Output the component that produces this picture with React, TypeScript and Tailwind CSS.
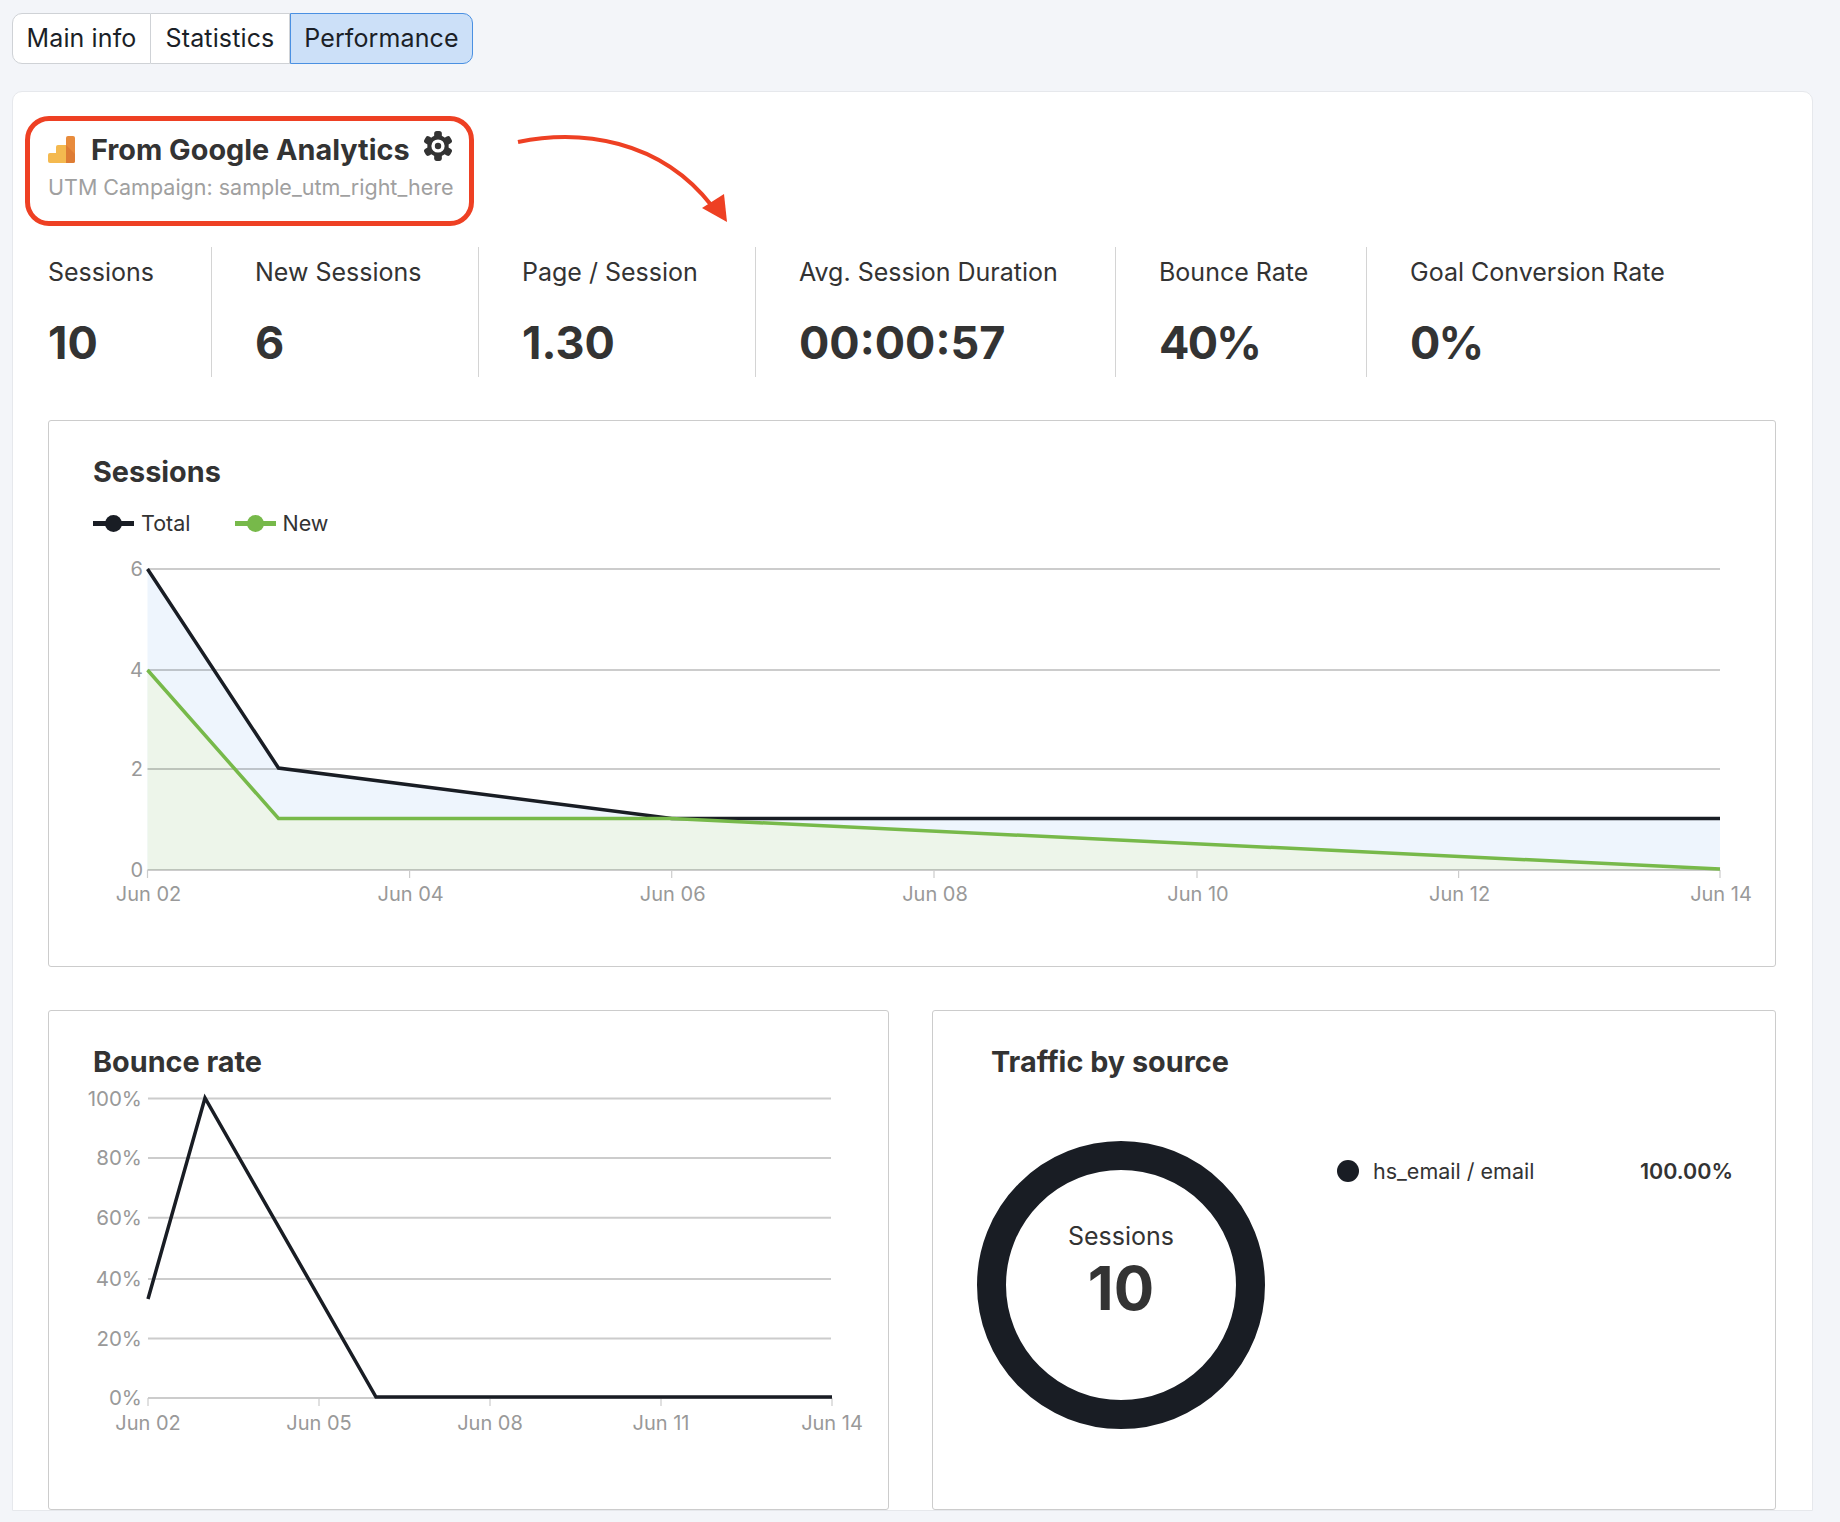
const font = { fontFamily: "Inter, sans-serif" };

const stats = [
  { label: "Sessions", value: "10", width: "w-[163px]" },
  { label: "New Sessions", value: "6", width: "w-[267px] border-l border-[#d4d4d4] pl-[43px]" },
  { label: "Page / Session", value: "1.30", width: "w-[277px] border-l border-[#d4d4d4] pl-[43px]" },
  { label: "Avg. Session Duration", value: "00:00:57", width: "w-[360px] border-l border-[#d4d4d4] pl-[43px]" },
  { label: "Bounce Rate", value: "40%", width: "w-[251px] border-l border-[#d4d4d4] pl-[43px]" },
  { label: "Goal Conversion Rate", value: "0%", width: "w-[380px] border-l border-[#d4d4d4] pl-[43px]" },
];

function AnalyticsLogo() {
  return (
    <svg width="28" height="27" viewBox="0 0 28 27" className="shrink-0">
      <rect x="0" y="17" width="12" height="10" rx="2" fill="#f4b94f" />
      <rect x="8" y="9" width="12" height="18" rx="2" fill="#f4b94f" />
      <rect x="18" y="0" width="9" height="27" rx="2" fill="#e88b3c" />
      <path d="M18 9 L27 18 V25 a2 2 0 0 1 -2 2 H18 Z" fill="#de7c34" />
    </svg>
  );
}

function Gear() {
  return (
    <svg width="32" height="32" viewBox="-15 -15 30 30" className="-mt-[7px] ml-[12px] shrink-0">
      <g fill="#333">
        <circle r="10" />
        {[0, 60, 120].map((a) => (
          <rect key={a} x="-3.6" y="-14" width="7.2" height="28" rx="2.4" transform={`rotate(${a})`} />
        ))}
      </g>
      <circle r="6.2" fill="#fff" />
      <circle r="3" fill="#333" />
    </svg>
  );
}

function SessionsChart() {
  const ticks = [
    ["Jun 02", 147.5],
    ["Jun 04", 409.6],
    ["Jun 06", 671.7],
    ["Jun 08", 934],
    ["Jun 10", 1197],
    ["Jun 12", 1458.6],
    ["Jun 14", 1720],
  ] as const;
  const grid = [
    ["6", 569],
    ["4", 670],
    ["2", 769],
    ["0", 870],
  ] as const;
  return (
    <svg viewBox="49 545 1726 370" className="block h-[370px] w-[1726px]">
      <path d="M147.5 569 L278.5 769 L671.7 819 H1720 V870 H147.5 Z" fill="#eef5fd" />
      <path d="M147.5 670 L278.5 819 H671.7 L1720 870 H147.5 Z" fill="#edf5ea" />
      {grid.map(([label, y]) => (
        <g key={label}>
          <line x1="147.5" x2="1720" y1={y} y2={y} stroke="#000" strokeOpacity="0.2" strokeWidth="2" />
          <text x="143" y={y + 7} textAnchor="end" fontSize="20" fill="#999">
            {label}
          </text>
        </g>
      ))}
      {ticks.map(([label, x]) => (
        <g key={label}>
          <line x1={x} x2={x} y1="870" y2="878" stroke="#ccc" strokeWidth="1.2" />
          <text x={x + 1} y="901" textAnchor="middle" fontSize="20" fill="#999">
            {label}
          </text>
        </g>
      ))}
      <path d="M147.5 569 L278.5 768 L671.7 818.5 H1720" fill="none" stroke="#191d24" strokeWidth="3.5" />
      <path d="M147.5 670 L278.5 818.5 H671.7 L1720 869" fill="none" stroke="#77b94a" strokeWidth="3.5" />
    </svg>
  );
}

function BounceChart() {
  const grid = [
    ["100%", 1098.6],
    ["80%", 1158],
    ["60%", 1217.7],
    ["40%", 1279],
    ["20%", 1338.5],
    ["0%", 1398],
  ] as const;
  const ticks = [
    ["Jun 02", 148],
    ["Jun 05", 319],
    ["Jun 08", 490],
    ["Jun 11", 661],
    ["Jun 14", 832],
  ] as const;
  return (
    <svg viewBox="49 1085 838 350" className="mt-[6px] block h-[350px] w-[838px]">
      {grid.map(([label, y]) => (
        <g key={label}>
          <line x1="148" x2="831" y1={y} y2={y} stroke="#ccc" strokeWidth="2" />
          <text x="142" y={y + 7} textAnchor="end" fontSize="20.5" fill="#999">
            {label}
          </text>
        </g>
      ))}
      {ticks.map(([label, x]) => (
        <g key={label}>
          <line x1={x} x2={x} y1="1398" y2="1406" stroke="#ccc" strokeWidth="1.2" />
          <text x={x} y="1430" textAnchor="middle" fontSize="20" fill="#999">
            {label}
          </text>
        </g>
      ))}
      <path d="M148 1299 L205 1098 L376 1397 H832" fill="none" stroke="#191d24" strokeWidth="3.5" />
    </svg>
  );
}

export default function App() {
  return (
    <div className="h-[1522px] overflow-hidden bg-[#f3f5f9] pl-3 pt-[13px]" style={font}>
      <div className="flex h-[51px] w-[461px] text-[25px] tracking-[0.005em] text-[#1b1f27]">
        <div className="flex w-[139px] items-center justify-center rounded-l-[10px] border border-[#cfd2d6] bg-white">Main info</div>
        <div className="flex w-[139px] items-center justify-center border-y border-r border-[#cfd2d6] bg-white">Statistics</div>
        <div className="flex w-[183px] items-center justify-center rounded-r-[10px] border border-[#4a90e2] bg-[#cce0f8]">Performance</div>
      </div>

      <div className="relative mt-[27px] w-[1801px] rounded-t-[10px] border border-[#e6e8ec] bg-white pt-[24px]">
        <div className="ml-3 flex h-[110px] w-[449px] flex-col rounded-[24px] border-[5px] border-[#ee4023] pl-[18px] pt-[7px]">
          <div className="flex items-center">
            <AnalyticsLogo />
            <span className="ml-[15px] text-[28.8px] font-bold text-[#333]">From Google Analytics</span>
            <Gear />
          </div>
          <div className="text-[21.5px] text-[#a0a0a0]">UTM Campaign: sample_utm_right_here</div>
        </div>

        {/* arrow */}
        <svg className="absolute left-[477px] top-[27px]" width="250" height="110" viewBox="490 120 250 110">
          <path d="M518 143 C 580 130, 660 140, 712 207" fill="none" stroke="#ee4023" strokeWidth="4" />
          <path d="M727 223 L702 209 L724 195 Z" fill="#ee4023" />
        </svg>

        <div className="ml-[35px] mt-[21px] flex h-[130px] text-[#333]">
          {stats.map((s) => (
            <div key={s.label} className={s.width}>
              <div className="pt-[10px] text-[25px] leading-[30px]">{s.label}</div>
              <div className={`mt-[28px] text-[45px] font-bold leading-[56px] ${s.value.endsWith("%") ? "tracking-[-0.04em]" : ""}`}>{s.value}</div>
            </div>
          ))}
        </div>

        <div className="ml-[35px] mt-[43px] h-[547px] w-[1728px] rounded-[3px] border border-[#ccc]">
          <div className="pl-[44px] pt-[34px] text-[28.8px] font-bold leading-[34px] text-[#333]">Sessions</div>
          <div className="ml-[44px] mt-[20px] flex h-[28px] items-center text-[21.5px] text-[#333]">
            <span className="relative mr-[7px] h-[5px] w-[41px] bg-[#191d24]">
              <span className="absolute left-[12px] top-[-6px] h-[17px] w-[17px] rounded-full bg-[#191d24]" />
            </span>
            Total
            <span className="relative ml-[44px] mr-[7px] h-[5px] w-[41px] bg-[#77b94a]">
              <span className="absolute left-[12px] top-[-6px] h-[17px] w-[17px] rounded-full bg-[#77b94a]" />
            </span>
            New
          </div>
          <div className="mt-[8px]">
            <SessionsChart />
          </div>
        </div>

        <div className="ml-[35px] mt-[43px] flex w-[1728px] gap-[43px]">
          <div className="h-[500px] w-[841px] rounded-[3px] border border-[#ccc]">
            <div className="pl-[44px] pt-[34px] text-[28.8px] font-bold leading-[34px] text-[#333]">Bounce rate</div>
            <BounceChart />
          </div>
          <div className="flex h-[500px] w-[844px] rounded-[3px] border border-[#ccc]">
            <div className="w-[400px] shrink-0">
              <div className="pl-[58px] pt-[34px] text-[28.8px] font-bold leading-[34px] text-[#333]">Traffic by source</div>
              <div className="relative ml-[44px] mt-[62px] flex h-[288px] w-[288px] flex-col items-center rounded-full border-[29px] border-[#191d24] pt-[51px] text-[#333]">
                <span className="text-[25px] leading-[30px]">Sessions</span>
                <span className="mt-[2px] text-[60px] font-bold leading-[70px]">10</span>
              </div>
            </div>
            <div className="ml-[4px] mt-[143px] flex h-[34px] w-[396px] items-center text-[21.5px] text-[#333]">
              <span className="mr-[14px] h-[22px] w-[22px] rounded-full bg-[#191d24]" />
              hs_email / email
              <span className="ml-auto font-semibold">100.00%</span>
            </div>
          </div>
        </div>
      </div>
    </div>
  );
}
